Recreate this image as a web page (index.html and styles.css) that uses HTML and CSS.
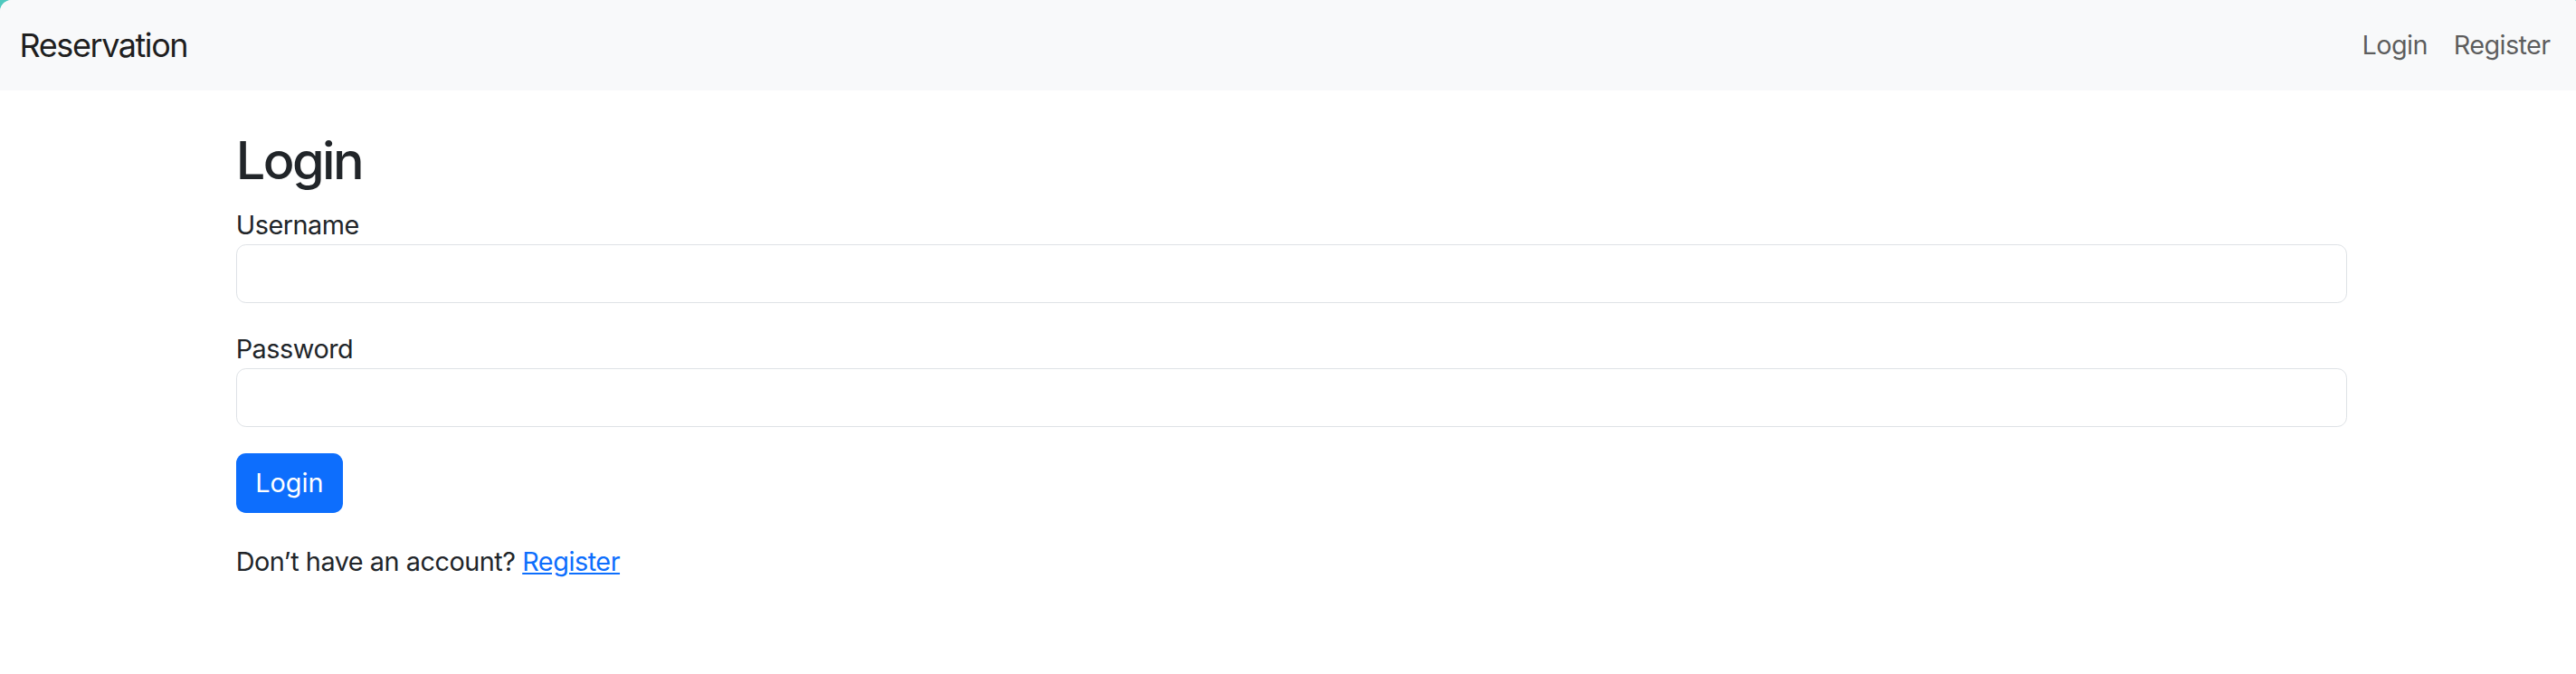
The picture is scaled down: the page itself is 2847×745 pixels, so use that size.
FILE: index.html
```html
<!DOCTYPE html>
<html lang="en">
<head>
<meta charset="utf-8">
<title>Reservation - Login</title>
<link rel="stylesheet" href="styles.css">
</head>
<body>
<div class="page">
  <nav class="navbar">
    <a class="brand" href="#">Reservation</a>
    <ul class="nav-links">
      <li><a class="nav-link" href="#">Login</a></li>
      <li><a class="nav-link" href="#">Register</a></li>
    </ul>
  </nav>
  <main class="container">
    <h2 class="title">Login</h2>
    <form class="form">
      <div class="field">
        <label class="label" for="username">Username</label>
        <input class="input" id="username" type="text">
      </div>
      <div class="field">
        <label class="label" for="password">Password</label>
        <input class="input" id="password" type="password">
      </div>
      <button class="btn" type="submit">Login</button>
    </form>
    <p class="note">Don’t have an account? <a class="link" href="#">Register</a></p>
  </main>
</div>
</body>
</html>
```
FILE: styles.css
```css
* { box-sizing: border-box; }
html { background: #4fc9bf; }
body {
  margin: 0;
  font-family: Inter, "Noto Sans", sans-serif;
  font-size: 28.8px;
  line-height: 1.5;
  letter-spacing: -0.016em;
  color: #212529;
}
.page {
  background: #fff;
  min-height: 100vh;
  border-radius: 13px 2px 0 0;
  overflow: hidden;
}
.navbar {
  display: flex;
  align-items: center;
  justify-content: space-between;
  background: #f8f9fa;
  height: 100px;
  padding: 0 14px 0 21.6px;
}
.brand {
  font-size: 36px;
  line-height: 54px;
  letter-spacing: -0.04em;
  color: rgba(0, 0, 0, 0.9);
  text-decoration: none;
}
.nav-links {
  display: flex;
  list-style: none;
  margin: 0;
  padding: 0;
}
.nav-link {
  display: block;
  padding: 14.4px;
  letter-spacing: -0.02em;
  color: rgba(0, 0, 0, 0.65);
  text-decoration: none;
}
.container {
  width: 2376px;
  margin: 43.2px auto 0;
  padding: 0 18px 0 25.2px;
}
.title {
  font-size: 57.6px;
  font-weight: 500;
  line-height: 1.2;
  letter-spacing: -0.044em;
  margin: 0 0 14.4px;
}
.form { margin: 0; }
.field { margin-bottom: 28.8px; }
.label { display: inline-block; }
.input {
  display: block;
  width: 100%;
  height: 65px;
  padding: 10.8px 21.6px;
  font: inherit;
  border: 1.8px solid #dee2e6;
  border-radius: 10.8px;
  background: #fff;
}
.btn {
  display: block;
  height: 66px;
  padding: 0 21.6px;
  font: inherit;
  color: #fff;
  background: #0d6efd;
  border: 0;
  border-radius: 10.8px;
}
.note { margin: 32px 0 0; }
.link { color: #0d6efd; }
```
